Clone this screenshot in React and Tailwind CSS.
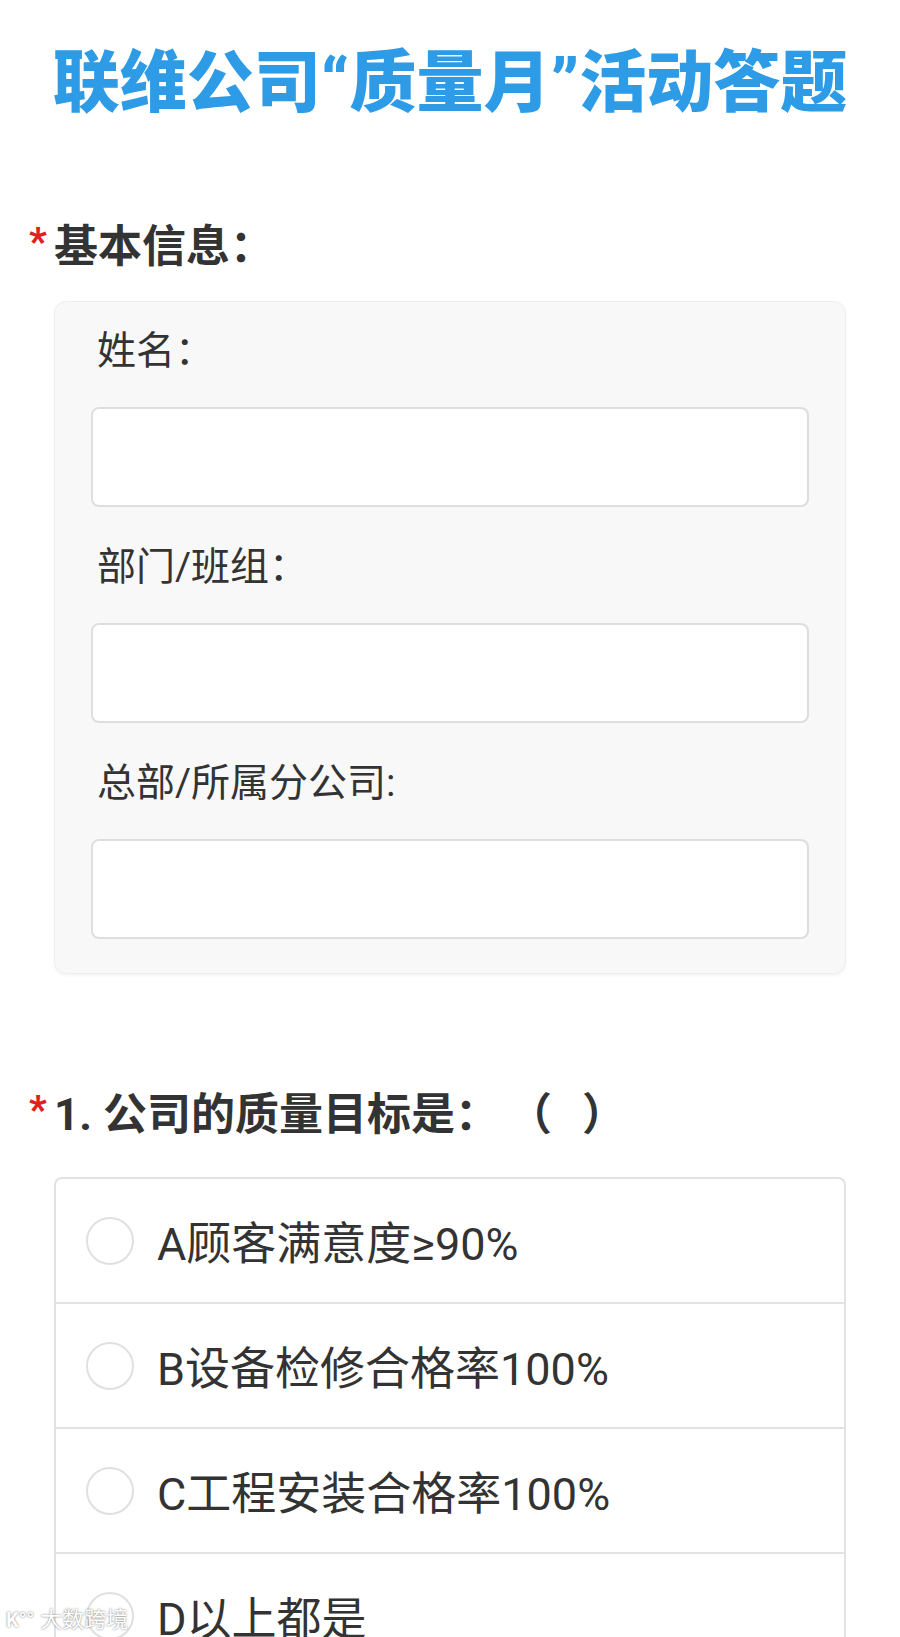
import React from 'react';

const fields = ['姓名：', '部门/班组：', '总部/所属分公司:'];

const options = ['A顾客满意度≥90%', 'B设备检修合格率100%', 'C工程安装合格率100%', 'D以上都是'];

const Required = ({ children }) => (
    <div className="flex items-start pl-[29px]">
        <span className="w-[25px] text-[38px] font-black leading-none text-[#e0201c] mt-[4px]">*</span>
        <span className="text-[44px] font-bold leading-[56px] text-[#333]">{children}</span>
    </div>
);

const App = () => {
    return (
        <div className="relative min-h-[1637px] overflow-hidden bg-white font-['Roboto','Noto_Sans_CJK_SC',sans-serif] text-[#333]">

            {/* Title */}
            <h1 className="pt-[44px] text-center text-[67px] font-black leading-[78px] text-[#2e9be6]">
                联维公司“质量月”活动答题
            </h1>

            {/* Basic info */}
            <div className="mt-[97px]">
                <Required>基本信息：</Required>
            </div>

            <div className="mx-[54px] mt-[26px] rounded-xl border border-[#eeeeee] bg-[#f8f8f8] px-[36px] pt-[29px] pb-[34px] shadow-[0_2px_3px_rgba(0,0,0,0.04)]">
                {fields.map((label, idx) => (
                    <div key={idx} className={idx > 0 ? 'mt-[40px]' : ''}>
                        <div className="pl-[6px] text-[39px] leading-[40px] text-[#333]">{label}</div>
                        <div className="mt-[36px] h-[100px] rounded-lg border-2 border-[#dedede] bg-white"></div>
                    </div>
                ))}
            </div>

            {/* Question 1 */}
            <div className="mt-[113px]">
                <Required>
                    1. 公司的质量目标是：<span className="ml-[31px]">（</span><span className="ml-[30px]">）</span>
                </Required>
            </div>

            <div className="mx-[54px] mt-[34px] rounded-t-lg border-2 border-b-0 border-[#e2e2e2] bg-white">
                {options.map((opt, idx) => (
                    <div key={idx} className="flex h-[125px] items-center border-b-2 border-[#e2e2e2] pl-[30px]">
                        <span className="h-[48px] w-[48px] shrink-0 rounded-full border-2 border-[#e0e0e0] bg-white"></span>
                        <span className="ml-[23px] mt-[8px] text-[45px] leading-none text-[#333]">{opt}</span>
                    </div>
                ))}
            </div>

            {/* Watermark */}
            <div className="absolute left-[6px] top-[1603px] flex items-center gap-[6px] text-[22px] text-white [text-shadow:0_0_2px_rgba(0,0,0,0.6)]">
                <span className="text-[20px] font-bold">K°°</span>
                <span>大数跨境</span>
            </div>

        </div>
    );
};

export default App;
